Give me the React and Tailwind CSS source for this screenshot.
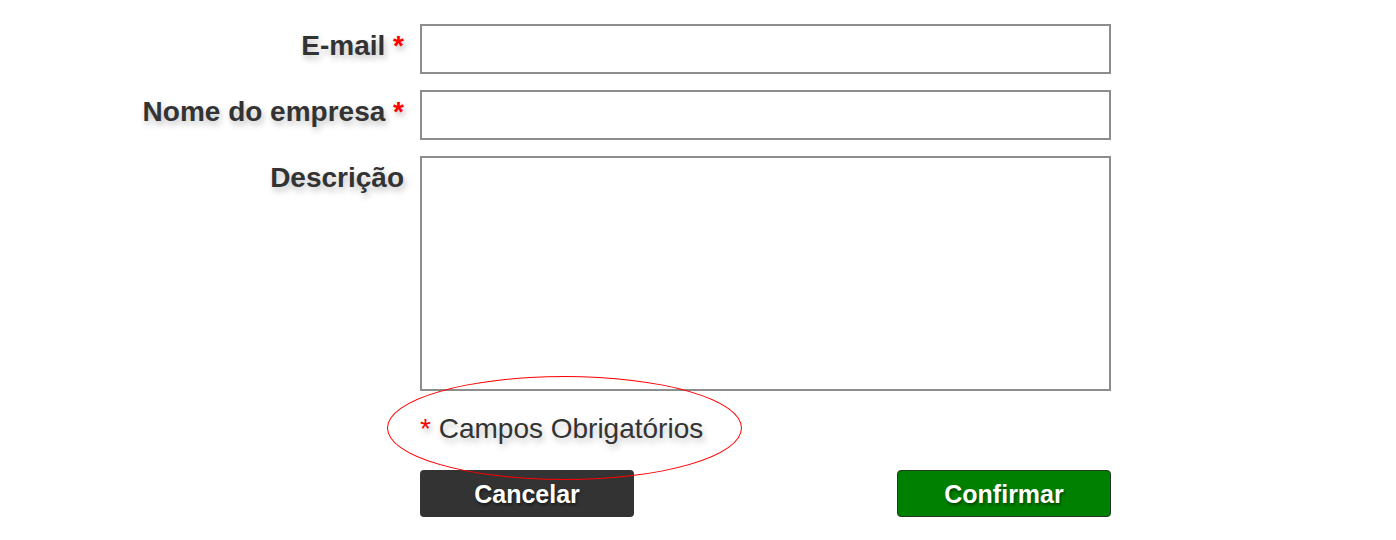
import React from 'react';

const shadow = '[text-shadow:2px_4px_6px_rgba(0,0,0,0.24)]';

function Label({ children, required }) {
  return (
    <label className={`pt-[6px] text-right text-[28px] leading-[32px] font-bold text-[#333] ${shadow}`}>
      {children}
      {required && <span className="text-[#ff0000]"> *</span>}
    </label>
  );
}

export default function App() {
  return (
    <div className="min-h-[540px] bg-white pt-[24px] font-['Liberation_Sans',Arial,sans-serif]">
      <form className="grid grid-cols-[404px_691px] gap-x-[16px] gap-y-[16px]">
        <Label required>E-mail</Label>
        <input type="email" className="h-[50px] w-full border-2 border-[#8d8d8d] bg-white" />

        <Label required>Nome do empresa</Label>
        <input type="text" className="h-[50px] w-full border-2 border-[#8d8d8d] bg-white" />

        <Label>Descrição</Label>
        <textarea className="h-[235px] w-full resize-none border-2 border-[#8d8d8d] bg-white" />

        <div />
        <div className="flex flex-col">
          <div className="relative mt-[6px]">
            <p className={`text-[28px] leading-[32px] text-[#333] ${shadow}`}>
              <span className="text-[#ff0000]">*</span> Campos Obrigatórios
            </p>
            <div className="pointer-events-none absolute left-[-33px] top-[-37px] h-[104px] w-[355px] rounded-[50%] border border-[#ff0000]" />
          </div>

          <div className="mt-[25px] flex justify-between">
            <button
              type="button"
              className="h-[47px] w-[214px] rounded-[4px] bg-[#333] pt-[2px] text-[25px] font-bold text-white [text-shadow:1px_2px_3px_rgba(0,0,0,0.5)]"
            >
              Cancelar
            </button>
            <button
              type="submit"
              className="h-[47px] w-[214px] rounded-[4px] border border-[#1f3a1f] bg-[#008000] pt-[2px] text-[25px] font-bold text-white [text-shadow:1px_2px_3px_rgba(0,0,0,0.5)]"
            >
              Confirmar
            </button>
          </div>
        </div>
      </form>
    </div>
  );
}
